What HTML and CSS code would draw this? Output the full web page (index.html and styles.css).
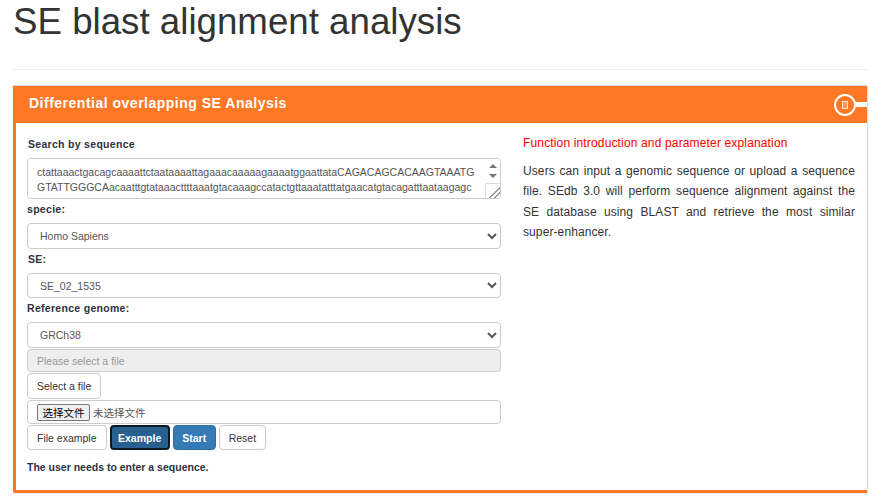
FILE: index.html
```html
<!DOCTYPE html>
<html lang="en">
<head>
    <meta charset="UTF-8">
    <title>SE blast alignment analysis</title>
    <link rel="stylesheet" href="styles.css">
</head>
<body>

<div class="page-header">
    <h1>SE blast alignment analysis</h1>
</div>

<div class="panel">
    <div class="panel-heading">
        <span class="panel-title">Differential overlapping SE Analysis</span>
        <span class="panel-tool"><span class="tool-ring"><span class="tool-dot"></span></span><span class="tool-bar"></span></span>
    </div>
    <div class="panel-body">
        <form class="left-col">
            <label class="seq-label">Search by sequence</label>
            <div class="seq-wrap">
                <textarea class="form-control seq-box" spellcheck="false">ctattaaactgacagcaaaattctaataaaattagaaacaaaaagaaaatggaattataCAGACAGCACAAGTAAATGGTATTGGGCAacaatttgtataaacttttaaatgtacaaagccatactgttaaatatttatgaacatgtacagatttaataagagcatacagtatgcaaaatgtgaaatattagcaaatccaaaagaatttgcatatttatcatgtttagcatttagcaatagtgtaaattaagtatgacatggtcagatttaagcatagatatgcatagatagtacaaagtatgtttagaacaatatgacaatagtacattagcatggacttaagatagcagtatagcagattagcatttaggacatagtacagatttaa</textarea>
                <span class="scroll-arrows"><span class="arrow-up"></span><span class="arrow-down"></span></span>
            </div>

            <label>specie:</label>
            <select class="form-control select-box">
                <option>Homo Sapiens</option>
            </select>

            <label class="se-label">SE:</label>
            <select class="form-control select-box select-short">
                <option>SE_02_1535</option>
            </select>

            <label>Reference genome:</label>
            <select class="form-control select-box">
                <option>GRCh38</option>
            </select>

            <input class="form-control file-name" type="text" placeholder="Please select a file" disabled>
            <button type="button" class="btn select-file">Select a file</button>
            <div class="form-control file-row">
                <button type="button" class="file-btn">选择文件</button>
                <span class="file-none">未选择文件</span>
            </div>
            <div class="btn-row">
                <button type="button" class="btn">File example</button>
                <button type="button" class="btn btn-primary btn-focus">Example</button>
                <button type="button" class="btn btn-primary">Start</button>
                <button type="button" class="btn">Reset</button>
            </div>
            <p class="hint">The user needs to enter a sequence.</p>
        </form>

        <div class="right-col">
            <p class="intro-title">Function introduction and parameter explanation</p>
            <p class="intro-text">Users can input a genomic sequence or upload a sequence file. SEdb 3.0 will perform sequence alignment against the SE database using BLAST and retrieve the most similar super-enhancer.</p>
        </div>
    </div>
</div>

</body>
</html>
```

FILE: styles.css
```css
* {
    box-sizing: border-box;
}

body {
    margin: 0;
    padding: 0 13px;
    height: 502px;
    overflow: hidden;
    font-family: "Liberation Sans", Arial, sans-serif;
    font-size: 10.5px;
    color: #333;
    background-color: #fff;
}

.page-header {
    height: 70px;
    border-bottom: 1px solid #eee;
}

h1 {
    margin: 0;
    font-size: 36.7px;
    font-weight: 400;
    line-height: 44px;
    color: #333;
}

/* Panel */
.panel {
    width: 855px;
    margin-top: 15px;
    height: 408px;
    border: 1px solid #ddd;
    border-bottom: 3px solid #ff7826;
    border-left: 3px solid #ff7826;
    border-radius: 2px;
    box-shadow: 0 1px 2px rgba(0, 0, 0, 0.1);
}

.panel-heading {
    display: flex;
    justify-content: space-between;
    align-items: center;
    height: 37px;
    margin-left: -2px;
    padding-left: 15px;
    background-color: #ff7826;
}

.panel-title {
    padding-bottom: 3px;
    font-size: 14px;
    font-weight: 700;
    letter-spacing: 0.5px;
    color: #fff;
}

.panel-tool {
    display: flex;
    align-items: center;
}

.tool-ring {
    display: flex;
    justify-content: center;
    align-items: center;
    width: 22px;
    height: 22px;
    border: 2px solid #fff;
    border-radius: 50%;
}

.tool-dot {
    width: 6px;
    height: 8px;
    border: 1px solid #ffe3d1;
    background-color: #ff9a5c;
}

.tool-bar {
    width: 11px;
    height: 5px;
    background-color: #fff;
}

.panel-body {
    display: flex;
    align-items: flex-start;
    padding-left: 11px;
}

.left-col {
    width: 474px;
    display: flex;
    flex-direction: column;
    align-items: flex-start;
}

.right-col {
    width: 332px;
    margin-left: 22px;
    padding-top: 13px;
}

label {
    display: block;
    font-weight: 700;
    letter-spacing: 0.3px;
    line-height: 14px;
    color: #2c3242;
}

.seq-label {
    margin: 14px 0 0 1px;
}

.se-label {
    margin-left: 1px;
}

.form-control {
    display: block;
    width: 474px;
    border: 1px solid #ccc;
    border-radius: 4px;
    background-color: #fff;
    font-family: "Liberation Sans", Arial, sans-serif;
    font-size: 10.5px;
    color: #555;
    outline: none;
}

/* Sequence box */
.seq-wrap {
    position: relative;
    height: 40px;
    margin: 7px 0 4px;
}

.seq-box {
    height: 41px;
    padding: 6px 23px 6px 9px;
    line-height: 15px;
    resize: vertical;
}

.seq-box::-webkit-resizer {
    border-top: 1px solid #ddd;
    border-left: 1px solid #ddd;
    background-color: #fff;
    background-image: linear-gradient(135deg, transparent 60%, #999 60%, #999 65%, transparent 65%, transparent 78%, #999 78%, #999 83%, transparent 83%);
}

/* The scrollbar is hidden in the headless browser, so its arrows go on top */
.scroll-arrows {
    position: absolute;
    top: 6px;
    right: 1px;
    width: 15px;
    display: flex;
    flex-direction: column;
    align-items: center;
    gap: 6px;
}

.arrow-up {
    border-left: 4px solid transparent;
    border-right: 4px solid transparent;
    border-bottom: 4px solid #777;
}

.arrow-down {
    border-left: 4px solid transparent;
    border-right: 4px solid transparent;
    border-top: 4px solid #777;
}

.select-box {
    height: 26px;
    margin: 7px 0 3px;
    padding: 0 8px;
}

.select-short {
    height: 25px;
}

.file-name {
    height: 23px;
    margin-top: -2px;
    padding: 0 9px;
    background-color: #eee;
}

.file-name::placeholder {
    color: #999;
}

.select-file {
    margin-top: 1px;
}

.file-row {
    display: flex;
    align-items: center;
    gap: 3px;
    height: 24px;
    margin-top: 1px;
    padding: 1px 9px 0;
}

.file-btn {
    height: 17px;
    width: 53px;
    padding: 0;
    border: 1px solid #767676;
    border-radius: 2px;
    background-color: #efefef;
    font-family: "Noto Sans CJK SC", sans-serif;
    font-size: 10.5px;
    line-height: 14px;
    color: #000;
}

.file-none {
    font-family: "Noto Sans CJK SC", sans-serif;
    color: #555;
}

.btn {
    height: 26px;
    padding: 0 9px;
    border: 1px solid #ccc;
    border-radius: 4px;
    background-color: #fff;
    font-family: "Liberation Sans", Arial, sans-serif;
    font-size: 10.5px;
    color: #333;
}

.btn-row {
    display: flex;
    gap: 3px;
    margin-top: 1px;
}

.btn-row .btn {
    height: 25px;
}

.btn-row .btn-primary {
    padding: 0 8.5px;
    border-color: #2e6da4;
    background-color: #337ab7;
    font-weight: 700;
    color: #fff;
}

.btn-row .btn-focus {
    padding: 0 6.5px;
    border: 2px solid #101820;
    background-color: #286090;
}

.hint {
    margin: 10px 0 0;
    font-weight: 700;
    line-height: 14px;
    color: #2c3242;
}

.intro-title {
    margin: 0;
    font-size: 12px;
    letter-spacing: 0.15px;
    line-height: 14px;
    color: #f00;
}

.intro-text {
    margin: 11px 0 0;
    font-size: 12px;
    line-height: 20.4px;
    letter-spacing: 0.1px;
    text-align: justify;
    color: #333;
}
```
